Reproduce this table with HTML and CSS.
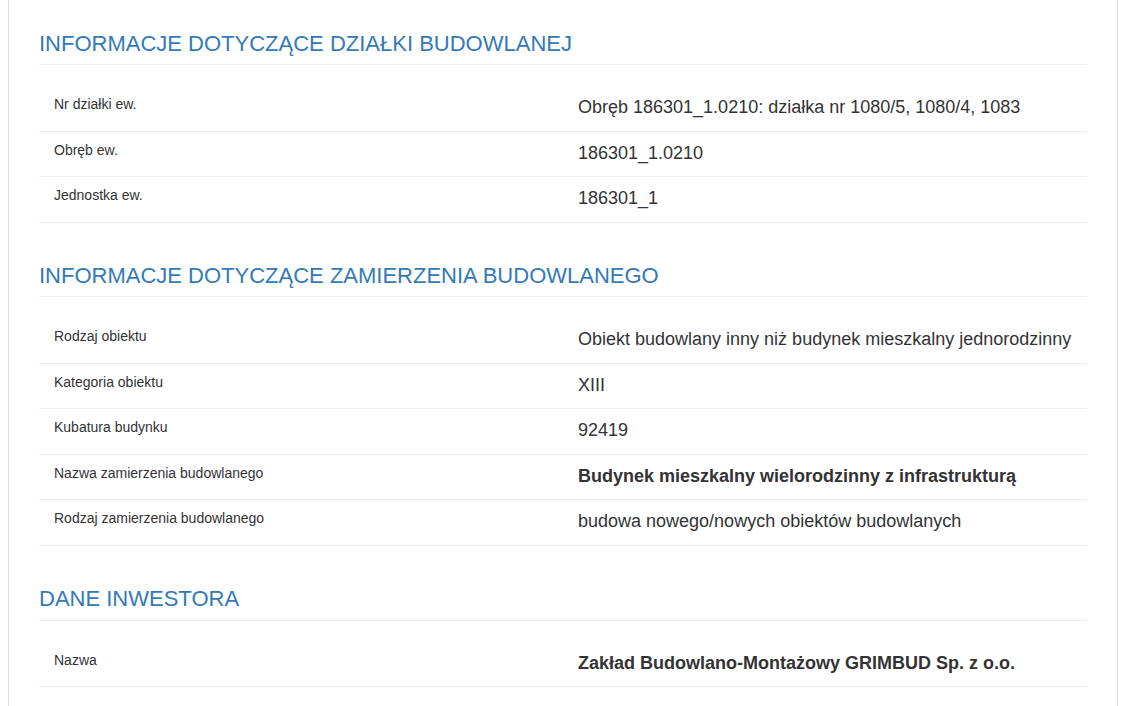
FILE: index.html
```html
<!DOCTYPE html>
<html lang="pl">
<head>
  <meta charset="UTF-8">
  <title>Informacje o inwestycji</title>
  <link rel="stylesheet" href="styles.css">
</head>
<body>
  <div class="panel">

    <div class="section first">
      <h3>INFORMACJE DOTYCZĄCE DZIAŁKI BUDOWLANEJ</h3>
      <div class="rows">
        <div class="row">
          <div class="label">Nr działki ew.</div>
          <div class="value">Obręb 186301_1.0210: działka nr 1080/5, 1080/4, 1083</div>
        </div>
        <div class="row">
          <div class="label">Obręb ew.</div>
          <div class="value">186301_1.0210</div>
        </div>
        <div class="row">
          <div class="label">Jednostka ew.</div>
          <div class="value">186301_1</div>
        </div>
      </div>
    </div>

    <div class="section">
      <h3>INFORMACJE DOTYCZĄCE ZAMIERZENIA BUDOWLANEGO</h3>
      <div class="rows">
        <div class="row">
          <div class="label">Rodzaj obiektu</div>
          <div class="value">Obiekt budowlany inny niż budynek mieszkalny jednorodzinny</div>
        </div>
        <div class="row">
          <div class="label">Kategoria obiektu</div>
          <div class="value">XIII</div>
        </div>
        <div class="row">
          <div class="label">Kubatura budynku</div>
          <div class="value">92419</div>
        </div>
        <div class="row">
          <div class="label">Nazwa zamierzenia budowlanego</div>
          <div class="value"><strong>Budynek mieszkalny wielorodzinny z infrastrukturą</strong></div>
        </div>
        <div class="row">
          <div class="label">Rodzaj zamierzenia budowlanego</div>
          <div class="value">budowa nowego/nowych obiektów budowlanych</div>
        </div>
      </div>
    </div>

    <div class="section">
      <h3>DANE INWESTORA</h3>
      <div class="rows">
        <div class="row">
          <div class="label">Nazwa</div>
          <div class="value"><strong>Zakład Budowlano-Montażowy GRIMBUD Sp. z o.o.</strong></div>
        </div>
      </div>
    </div>

  </div>
</body>
</html>
```

FILE: styles.css
```css
body {
  margin: 0;
  font-family: "Liberation Sans", Arial, sans-serif;
  color: #333;
  background: #fff;
}
.panel {
  margin: 0 8px;
  padding: 0 30px 40px;
  border-left: 1px solid #ddd;
  border-right: 1px solid #ddd;
  min-height: 706px;
}
.section {
  padding-top: 41.5px;
}
.section.first {
  padding-top: 32px;
}
h3 {
  margin: 0;
  padding-bottom: 8px;
  border-bottom: 1px solid #eee;
  font-size: 22px;
  font-weight: normal;
  line-height: 1.1;
  color: #337ab7;
}
.rows {
  padding-top: 21px;
}
.row {
  display: grid;
  grid-template-columns: 1fr 1fr;
  border-bottom: 1px solid #eee;
}
.label {
  padding: 8px 15px;
  font-size: 14px;
  line-height: 20px;
}
.value {
  padding: 9px 15px 9.8px;
  font-size: 18px;
  line-height: 1.42857;
}
```
